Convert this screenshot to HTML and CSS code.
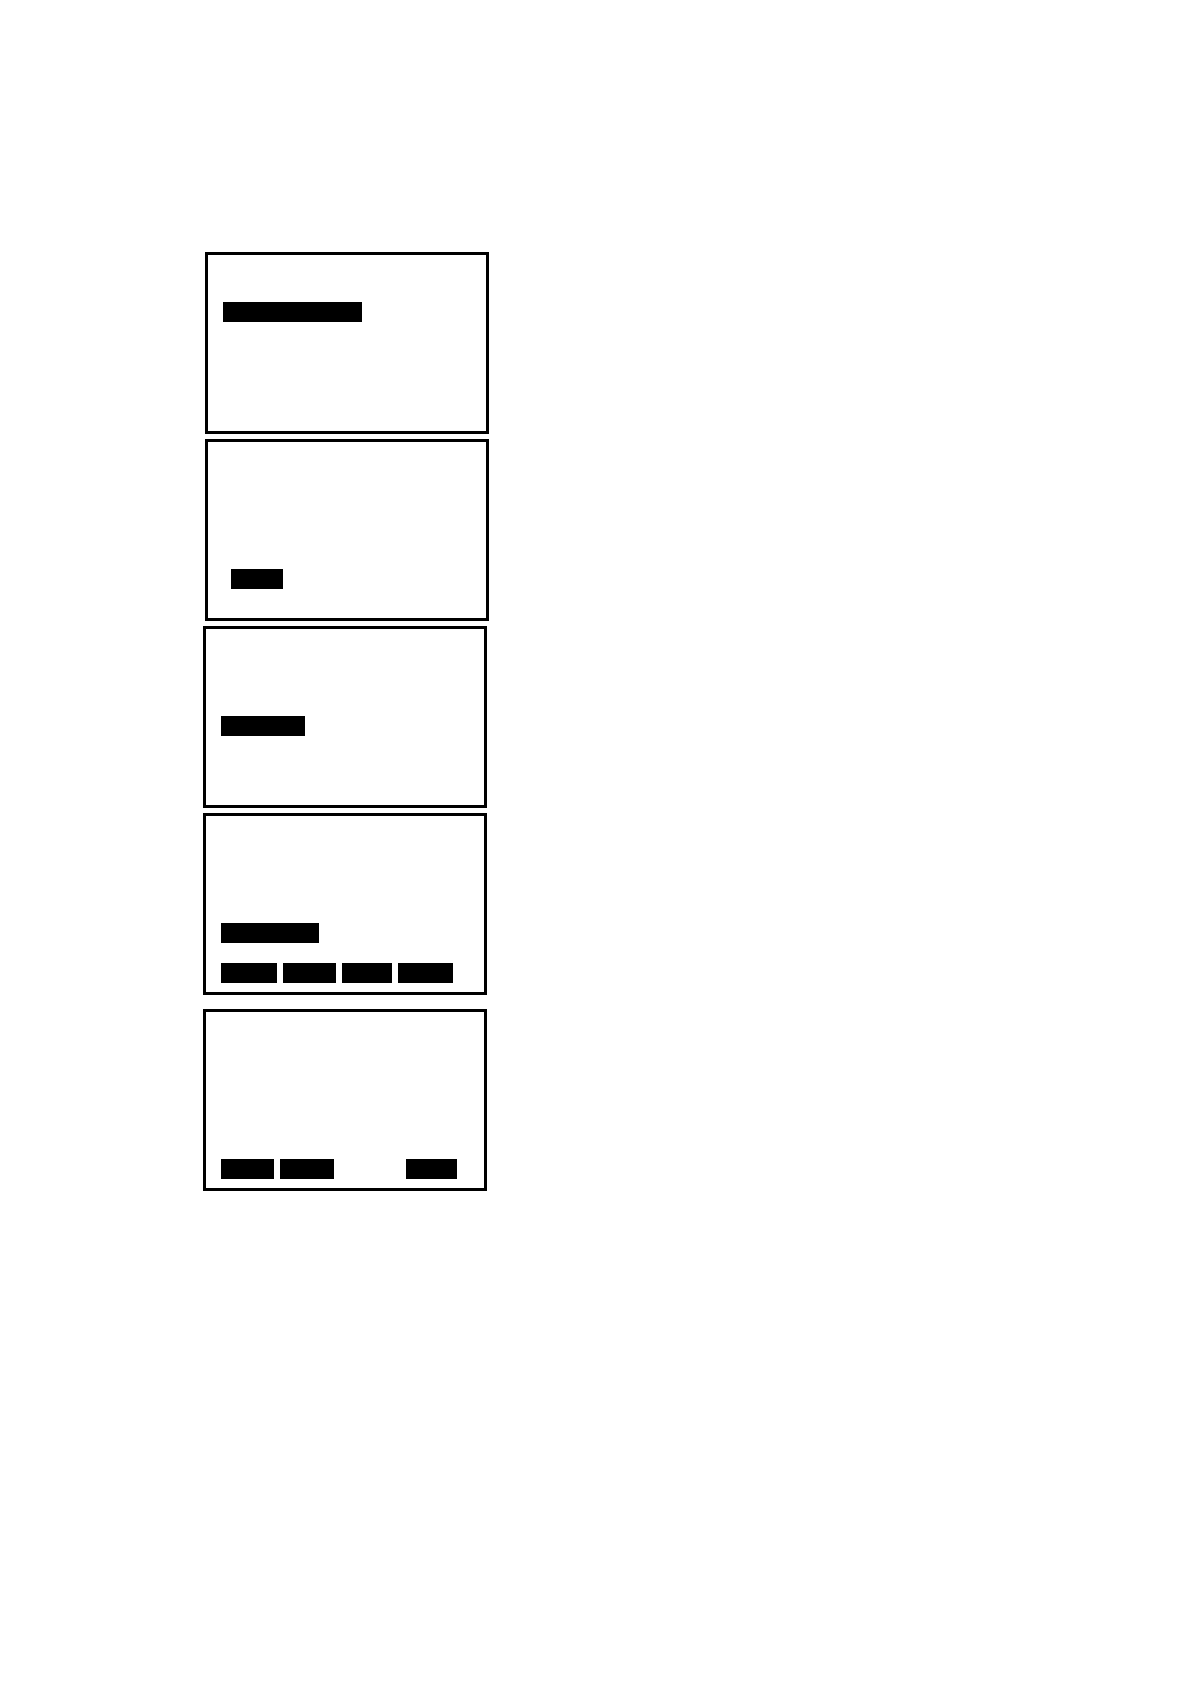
FILE: index.html
```html
<!DOCTYPE html>
<html lang="en">
<head>
    <meta charset="UTF-8">
    <meta name="viewport" content="width=device-width, initial-scale=1.0">
    <title>Display Screens</title>
    <link rel="stylesheet" href="styles.css">
</head>
<body>
    <main class="screens">
        <section class="screen indented">
            <div class="line line-3">
                <span class="bar bar-title"></span>
            </div>
        </section>
        <section class="screen indented">
            <div class="line line-7 line-inset">
                <span class="bar bar-value"></span>
            </div>
        </section>
        <section class="screen">
            <div class="line line-5">
                <span class="bar bar-option"></span>
            </div>
        </section>
        <section class="screen">
            <div class="line line-6">
                <span class="bar bar-field"></span>
            </div>
            <!-- Bottom row of keys -->
            <div class="line line-8 keys-four">
                <span class="bar"></span>
                <span class="bar"></span>
                <span class="bar"></span>
                <span class="bar"></span>
            </div>
        </section>
        <section class="screen screen-last">
            <div class="line line-8 keys-three">
                <span class="bar"></span>
                <span class="bar"></span>
                <span class="bar key-end"></span>
            </div>
        </section>
    </main>
</body>
</html>
```

FILE: styles.css
```css
body {
    font-family: "Liberation Sans", Arial, sans-serif;
    background: #fff;
    color: #000;
    margin: 0;
}
.screens {
    display: flex;
    flex-direction: column;
    gap: 5px;
    max-width: 284px;
    padding: 252px 20px 252px 203px;
}
/* Each screen has 8 lines of 20px */
.screen {
    display: grid;
    grid-template-rows: repeat(8, 20px);
    border: 3px solid #000;
    padding: 7px 15px 9px;
}
.indented {
    margin-left: 2px;
    margin-right: -2px;
}
.screen-last {
    margin-top: 9px;
}
.line {
    display: grid;
    justify-content: start;
}
.line-3 {
    grid-row: 3;
}
.line-5 {
    grid-row: 5;
}
.line-6 {
    grid-row: 6;
}
.line-7 {
    grid-row: 7;
}
.line-8 {
    grid-row: 8;
}
.line-inset {
    padding-left: 8px;
}
.bar {
    background: #000;
}
.bar-title {
    width: 139px;
}
.bar-value {
    width: 52px;
}
.bar-option {
    width: 84px;
}
.bar-field {
    width: 98px;
}
.keys-four {
    grid-template-columns: 56px 53px 50px 55px;
    column-gap: 6px;
}
.keys-three {
    grid-template-columns: 53px 54px 60px 51px;
    column-gap: 6px;
}
.key-end {
    grid-column: 4;
}
```
